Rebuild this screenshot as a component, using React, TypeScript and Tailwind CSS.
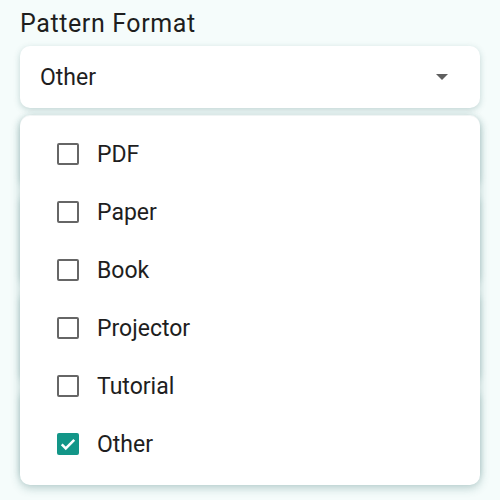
const options = ['PDF', 'Paper', 'Book', 'Projector', 'Tutorial', 'Other'];
const selected = ['Other'];

export default function App() {
    return (
        <div className="w-[500px] h-[500px] bg-[#f5fcfb] px-5 pt-[10px] overflow-hidden" style={{ fontFamily: 'Roboto, "Noto Sans", sans-serif' }}>
            <div className="text-[25px] leading-[28px] tracking-[0.6px] text-[#1e1e1e]">Pattern Format</div>

            <div className="relative mt-[8px]">
                {/* Select */}
                <div className="h-[62px] bg-white rounded-[10px] shadow-[0_2px_6px_rgba(40,100,100,0.25)] flex items-center justify-between pl-5 pr-8">
                    <span className="text-[23px] text-[#1e1e1e] pt-[2px]">Other</span>
                    <svg width="12" height="6" viewBox="0 0 12 6">
                        <path d="M0 0h12L6 6z" fill="#5f5f5f" />
                    </svg>
                </div>

                {/* Cards underneath the menu */}
                <div className="mt-[7px] flex flex-col gap-2">
                    <div className="h-[70px] bg-white rounded-[10px] shadow-[0_2px_6px_rgba(40,100,100,0.25)]" />
                    <div className="h-[90px] bg-white rounded-[10px] shadow-[0_2px_6px_rgba(40,100,100,0.25)]" />
                    <div className="h-[90px] bg-white rounded-[10px] shadow-[0_2px_6px_rgba(40,100,100,0.25)]" />
                    <div className="h-[90px] bg-white rounded-[10px] shadow-[0_2px_6px_rgba(40,100,100,0.25)]" />
                </div>

                {/* Dropdown menu */}
                <div className="absolute left-0 right-0 top-[70px] h-[369px] bg-white rounded-[10px] shadow-[0_3px_10px_rgba(40,100,100,0.3)] pt-[9px] pb-3">
                    {options.map((opt) => {
                        const checked = selected.includes(opt);
                        return (
                            <div key={opt} className="h-[58px] flex items-center pl-[37px]">
                                {checked ? (
                                    <div className="w-[22px] h-[22px] rounded-[2px] bg-[#139688] flex items-center justify-center">
                                        <svg width="20" height="20" viewBox="0 0 24 24">
                                            <path d="M4.5 12.5l4.8 4.8L19.5 7" fill="none" stroke="white" strokeWidth="3" />
                                        </svg>
                                    </div>
                                ) : (
                                    <div className="w-[22px] h-[22px] rounded-[2px] border-[2.5px] border-[#666]" />
                                )}
                                <span className="ml-[18px] text-[23px] text-[#1e1e1e] pt-[2px]">{opt}</span>
                            </div>
                        );
                    })}
                </div>
            </div>
        </div>
    );
}
